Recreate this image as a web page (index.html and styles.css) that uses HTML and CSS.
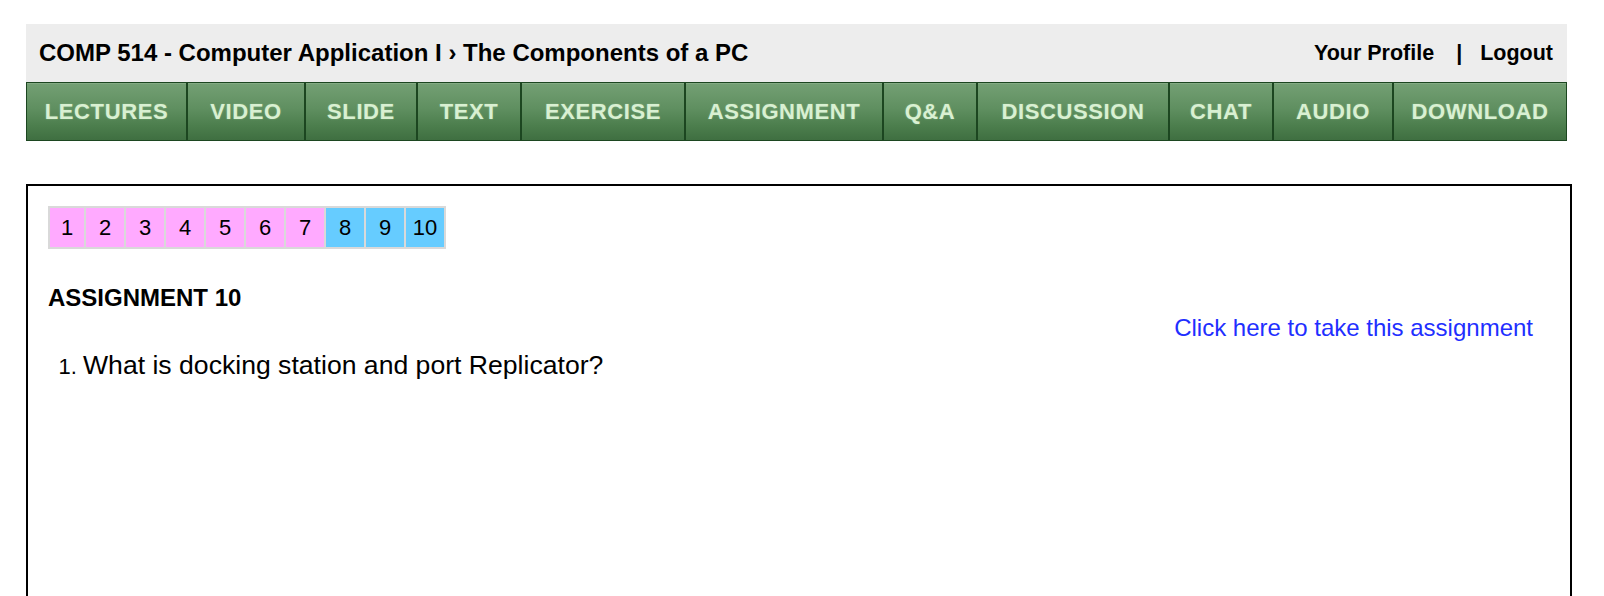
FILE: index.html
```html
<!DOCTYPE html>
<html lang="en">
<head>
<meta charset="utf-8">
<title>COMP 514 - Assignment 10</title>
<link rel="stylesheet" href="styles.css">
</head>
<body>
<div class="page">
  <header class="topbar">
    <div class="crumb">COMP 514 - Computer Application I › The Components of a PC</div>
    <div class="user">
      <a href="#">Your Profile</a>
      <span class="sep">|</span>
      <a href="#">Logout</a>
    </div>
  </header>
  <nav class="menu">
    <a href="#">LECTURES</a>
    <a href="#">VIDEO</a>
    <a href="#">SLIDE</a>
    <a href="#">TEXT</a>
    <a href="#">EXERCISE</a>
    <a href="#">ASSIGNMENT</a>
    <a href="#">Q&amp;A</a>
    <a href="#">DISCUSSION</a>
    <a href="#">CHAT</a>
    <a href="#">AUDIO</a>
    <a href="#">DOWNLOAD</a>
  </nav>
  <main class="box">
    <div class="pager">
      <a class="pg done" href="#">1</a>
      <a class="pg done" href="#">2</a>
      <a class="pg done" href="#">3</a>
      <a class="pg done" href="#">4</a>
      <a class="pg done" href="#">5</a>
      <a class="pg done" href="#">6</a>
      <a class="pg done" href="#">7</a>
      <a class="pg todo" href="#">8</a>
      <a class="pg todo" href="#">9</a>
      <a class="pg todo" href="#">10</a>
    </div>
    <h2 class="title">ASSIGNMENT 10</h2>
    <a class="take" href="#">Click here to take this assignment</a>
    <ol class="questions">
      <li><span class="q">What is docking station and port Replicator?</span></li>
    </ol>
  </main>
</div>
</body>
</html>
```

FILE: styles.css
```css
html, body {
  margin: 0;
  padding: 0;
  background: #ffffff;
}

body {
  font-family: "Liberation Sans", Arial, Helvetica, sans-serif;
  color: #000;
}

.page {
  padding: 24px 0 0 26px;
  width: 1546px;
}

.topbar {
  width: 1541px;
  height: 58px;
  box-sizing: border-box;
  background: #ededed;
  display: flex;
  align-items: center;
  justify-content: space-between;
  padding: 0 14px 0 13px;
  font-weight: bold;
  font-size: 24px;
  line-height: 58px;
}

.user {
  display: flex;
  align-items: center;
  font-size: 21.5px;
}

.user a {
  color: #000;
  text-decoration: none;
}

.sep {
  margin: 0 18px 0 22px;
}

.menu {
  width: 1541px;
  height: 59px;
  display: grid;
  grid-template-columns: 161px 118px 112px 104px 164px 198px 94px 192px 104px 120px 174px;
  background: #1f4a22;
}

.menu a {
  display: flex;
  align-items: center;
  justify-content: center;
  box-sizing: border-box;
  border: 1px solid #1c4620;
  background: linear-gradient(to bottom, #74a074 0%, #5f8f60 45%, #4c7e4d 75%, #3f6f41 100%);
  box-shadow: inset 0 1px 0 rgba(255, 255, 255, 0.12);
  color: #d9f0d2;
  text-decoration: none;
  font-weight: bold;
  font-size: 22px;
  letter-spacing: 0.6px;
  text-shadow: 0 0 2px rgba(200, 240, 190, 0.35);
}

.box {
  margin-top: 43px;
  height: 520px;
  border: 2px solid #000;
  padding: 20px;
  padding-right: 37px;
}

.pager {
  display: inline-flex;
  gap: 2px;
  padding: 2px;
  background: #d9d9d9;
}

.pg {
  width: 38px;
  height: 39px;
  display: flex;
  align-items: center;
  justify-content: center;
  font-size: 22px;
  color: #000;
  text-decoration: none;
}

.pg:first-child {
  width: 34px;
}

.done {
  background: #ffaaff;
}

.todo {
  background: #66ccff;
}

.title {
  margin: 35px 0 0 0;
  font-size: 24px;
  line-height: 28px;
  font-weight: bold;
}

.take {
  float: right;
  margin-top: 2px;
  font-size: 24px;
  line-height: 28px;
  color: #1f2fff;
  text-decoration: none;
}

.questions {
  margin: 38px 0 0 0;
  padding-left: 35px;
  font-size: 22px;
  line-height: 30px;
}

.q {
  font-size: 26.6px;
}
```
